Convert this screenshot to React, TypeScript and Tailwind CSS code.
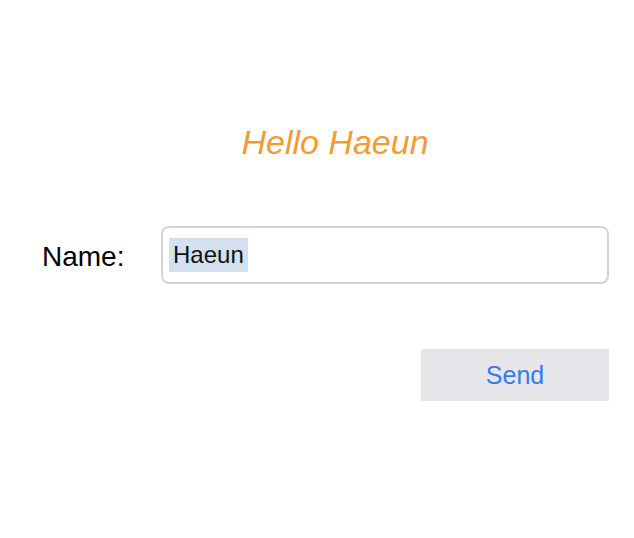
import React from 'react';

export default function App() {
  return (
    <div className="w-[634px] h-[538px] bg-white font-['Liberation_Sans',Arial,sans-serif] flex flex-col">
      <div className="mt-[122px] h-[40px] flex items-center justify-center pl-[36px]">
        <h1 className="text-[34px] italic text-[#f29b32] leading-none">Hello Haeun</h1>
      </div>

      <div className="mt-[64px] flex items-center pl-[42px] pr-[25px]">
        <label className="w-[119px] pt-[4px] text-[28px] text-black leading-none">Name:</label>
        <div className="flex-1 h-[58px] rounded-[8px] border-2 border-[#d4d4d4] flex items-center pl-[6px]">
          <span className="h-[34px] flex items-center px-[4px] bg-[#d3e1ee] text-[24px] text-[#111] leading-none">
            Haeun
          </span>
        </div>
      </div>

      <div className="mt-[65px] flex justify-end pr-[25px]">
        <button className="w-[188px] h-[52px] bg-[#e5e5ea] text-[#2f7cf6] text-[25px] leading-none flex items-center justify-center">
          Send
        </button>
      </div>
    </div>
  );
}
